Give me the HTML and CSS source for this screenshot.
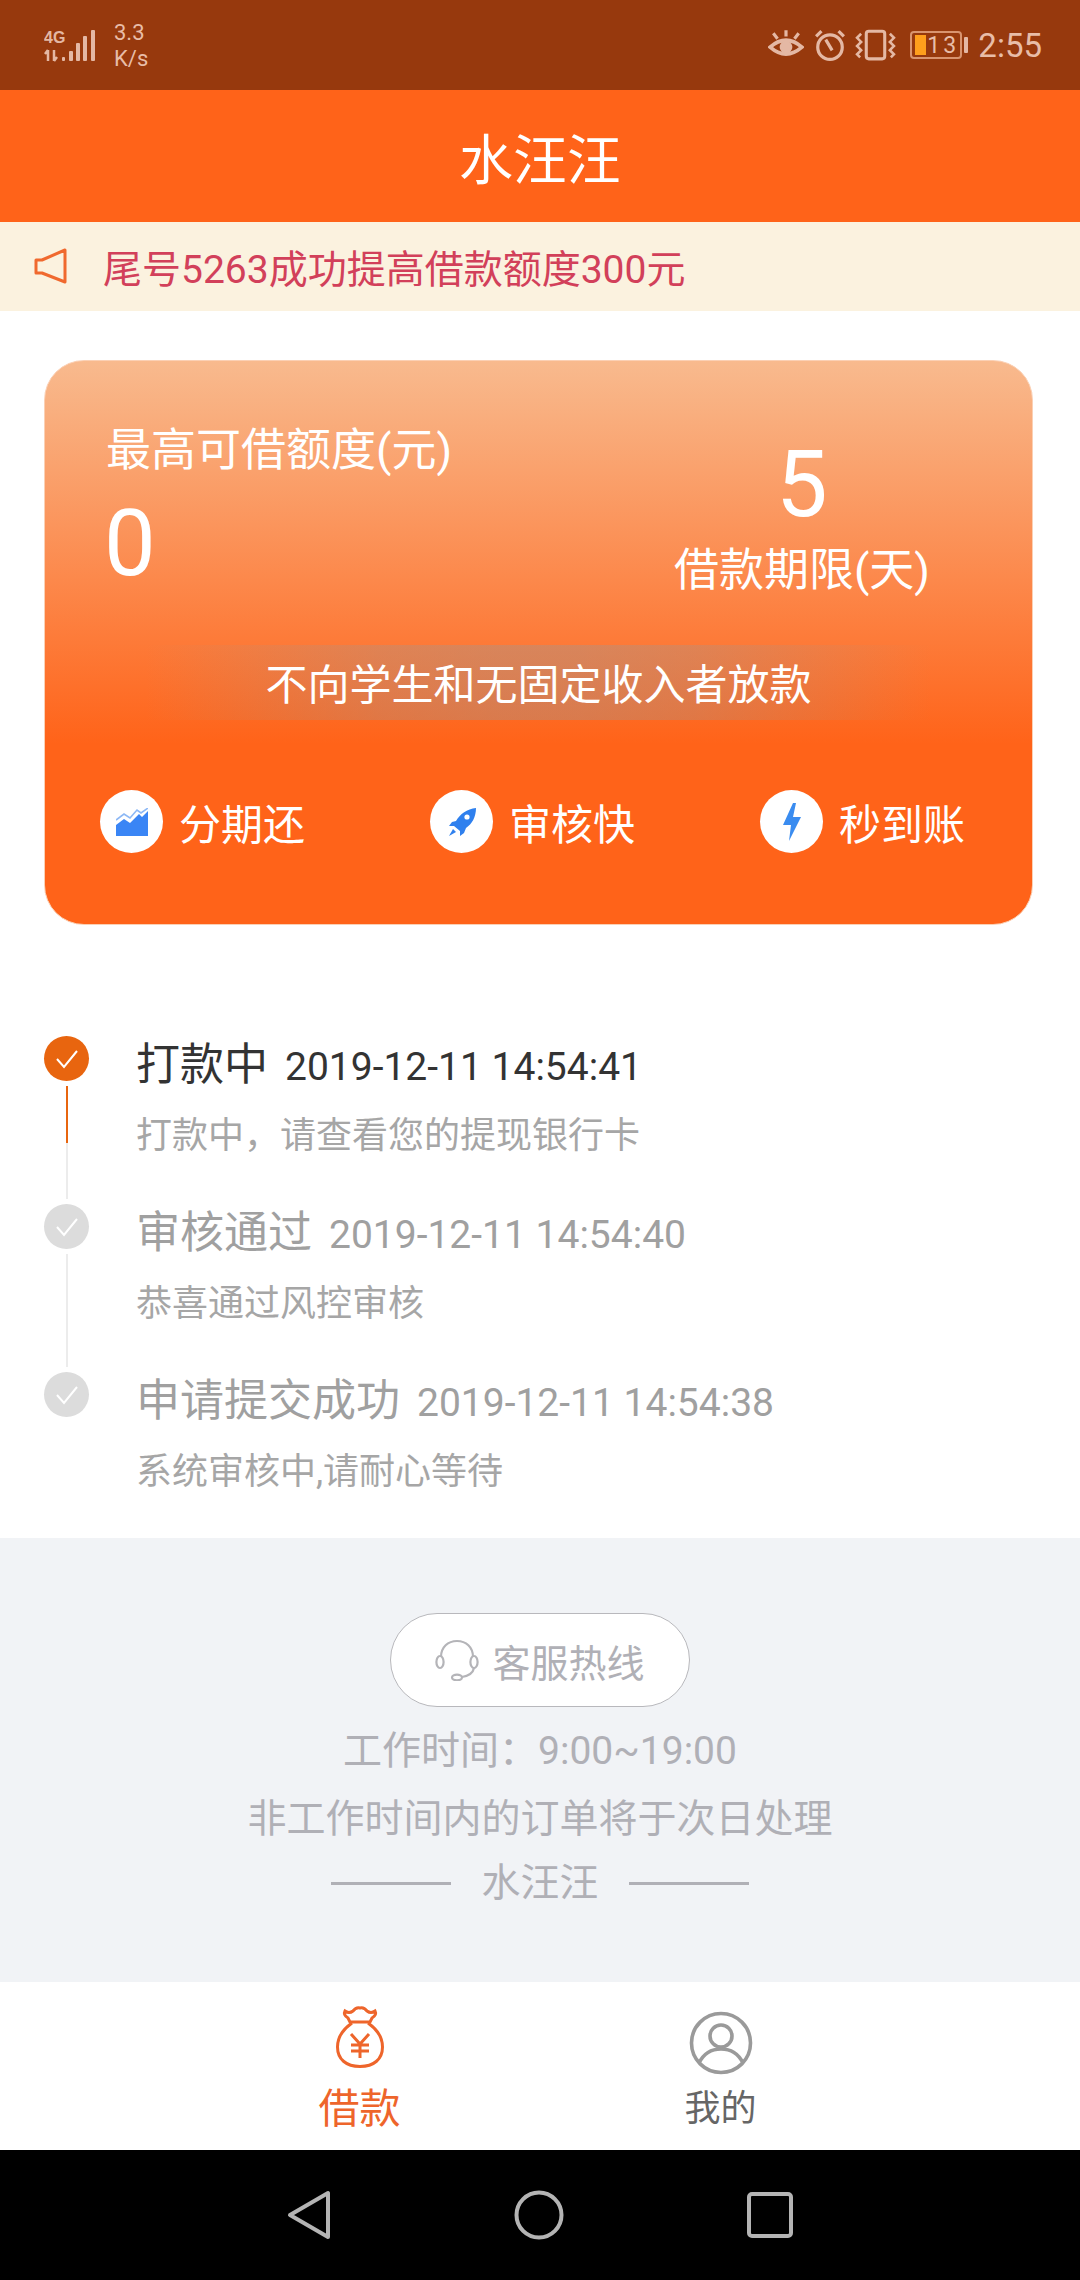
FILE: index.html
```html
<!DOCTYPE html>
<html lang="zh-CN">
<head>
  <meta charset="UTF-8">
  <title>水汪汪</title>
  <link rel="stylesheet" href="styles.css">
</head>
<body>

  <div class="statusbar">
    <div class="status-left">
      <svg class="signal" width="52" height="34" viewBox="0 0 52 34">
        <text x="0" y="14" class="net">4G</text>
        <path d="M4 32V21M4 21l-3 4M10 21v11M10 32l3-4" class="sig-arrow"/>
        <rect x="18" y="28" width="3" height="4" rx="1"/>
        <rect x="25" y="22" width="4" height="10" rx="1"/>
        <rect x="32" y="14" width="4" height="18" rx="1"/>
        <rect x="39" y="7" width="4" height="25" rx="1"/>
        <rect x="47" y="1" width="4" height="31" rx="1"/>
      </svg>
      <div class="speed">3.3<br>K/s</div>
    </div>
    <div class="status-right">
      <svg width="36" height="32" viewBox="0 0 34 30" class="st-icon">
        <path d="M2 17Q17 4 32 17Q17 30 2 17Z" fill="none" stroke-width="3.5"/>
        <circle cx="17" cy="17" r="6" fill="#e4b8a4" stroke="none"/>
        <path d="M17 1v6M5 4l4 5M29 4l-4 5" stroke-width="3"/>
      </svg>
      <svg width="32" height="32" viewBox="0 0 30 30" class="st-icon alarm">
        <circle cx="15" cy="17" r="11.5" fill="none" stroke-width="3"/>
        <path d="M11 10l6 10M2 7l5-5M28 7l-5-5" stroke-width="3"/>
      </svg>
      <svg width="41" height="32" viewBox="0 0 40 30" class="st-icon vibrate">
        <rect x="11" y="1.5" width="18" height="27" rx="2.5" fill="none" stroke-width="3"/>
        <path d="M6 4L2 8l4 4-4 4 4 4-4 4 3 3M34 4l4 4-4 4 4 4-4 4 4 4-3 3" fill="none" stroke-width="2.5"/>
      </svg>
      <div class="battery">
        <div class="battery-body"><span class="battery-fill"></span><span class="battery-num">13</span></div>
        <span class="battery-nub"></span>
      </div>
      <span class="clock">2:55</span>
    </div>
  </div>

  <div class="header">水汪汪</div>

  <div class="notice">
    <svg width="34" height="36" viewBox="0 0 34 36">
      <path d="M31 2L8 12H2V25H8L31 34Z" fill="none" stroke="#f0692e" stroke-width="3" stroke-linejoin="round"/>
    </svg>
    <span>尾号5263成功提高借款额度300元</span>
  </div>

  <div class="card">
    <div class="card-top">
      <div class="limit">
        <div class="card-label">最高可借额度(元)</div>
        <div class="card-num">0</div>
      </div>
      <div class="term">
        <div class="card-num">5</div>
        <div class="card-label">借款期限(天)</div>
      </div>
    </div>
    <div class="band">不向学生和无固定收入者放款</div>
    <div class="features">
      <div class="feature">
        <span class="feature-icon">
          <svg width="32" height="28" viewBox="0 0 32 28">
            <path d="M0 17L8 11L14 15L23 6L26 9L32 3V28H0Z" fill="#3a85f5"/>
            <path d="M0 12L8 6L14 10L21 2L25 5L32 0" fill="none" stroke="#8db8f5" stroke-width="1.6"/>
          </svg>
        </span>
        <span>分期还</span>
      </div>
      <div class="feature">
        <span class="feature-icon">
          <svg width="34" height="30" viewBox="0 0 34 30">
            <path d="M31 1C22 2 15 7 11 14L7 15L4 19L9 19L15 24L15 29L19 26L21 21C27 17 31 10 31 1Z" fill="#2f80ee"/>
            <circle cx="22" cy="10" r="2.6" fill="#fff"/>
            <path d="M8 22L4 29L11 25Z" fill="#2f80ee"/>
          </svg>
        </span>
        <span>审核快</span>
      </div>
      <div class="feature">
        <span class="feature-icon">
          <svg width="20" height="38" viewBox="0 0 20 38">
            <path d="M11 0L1 22H9L7 38L19 14H11L14 0Z" fill="#3a8cf0"/>
          </svg>
        </span>
        <span>秒到账</span>
      </div>
    </div>
  </div>

  <div class="timeline">
    <div class="step active">
      <div class="step-rail">
        <span class="dot"><svg width="26" height="22" viewBox="0 0 26 22"><path d="M3 11l7 8L23 3" fill="none" stroke="#fff" stroke-width="2"/></svg></span>
        <span class="rail-line"><i class="rail-on"></i></span>
      </div>
      <div class="step-body">
        <div class="step-title"><span class="step-name">打款中</span><span class="step-time">2019-12-11 14:54:41</span></div>
        <div class="step-desc">打款中，请查看您的提现银行卡</div>
      </div>
    </div>
    <div class="step">
      <div class="step-rail">
        <span class="dot"><svg width="26" height="22" viewBox="0 0 26 22"><path d="M3 11l7 8L23 3" fill="none" stroke="#fff" stroke-width="2"/></svg></span>
        <span class="rail-line"></span>
      </div>
      <div class="step-body">
        <div class="step-title"><span class="step-name">审核通过</span><span class="step-time">2019-12-11 14:54:40</span></div>
        <div class="step-desc">恭喜通过风控审核</div>
      </div>
    </div>
    <div class="step last">
      <div class="step-rail">
        <span class="dot"><svg width="26" height="22" viewBox="0 0 26 22"><path d="M3 11l7 8L23 3" fill="none" stroke="#fff" stroke-width="2"/></svg></span>
      </div>
      <div class="step-body">
        <div class="step-title"><span class="step-name">申请提交成功</span><span class="step-time">2019-12-11 14:54:38</span></div>
        <div class="step-desc">系统审核中,请耐心等待</div>
      </div>
    </div>
  </div>

  <div class="service">
    <div class="hotline">
      <svg width="44" height="42" viewBox="0 0 44 42" fill="none" stroke="#b4b4b8" stroke-width="2.2">
        <path d="M6 18C6 8 13 2 22 2C31 2 38 8 38 18"/>
        <ellipse cx="5" cy="23" rx="3.6" ry="6"/>
        <ellipse cx="39" cy="23" rx="3.6" ry="6"/>
        <path d="M39 29C38 34 33 37 27 38"/>
        <ellipse cx="22" cy="38.5" rx="5" ry="2.8"/>
      </svg>
      <span>客服热线</span>
    </div>
    <div class="service-line">工作时间：9:00~19:00</div>
    <div class="service-line">非工作时间内的订单将于次日处理</div>
    <div class="service-brand"><i></i><span>水汪汪</span><i></i></div>
  </div>

  <div class="tabbar">
    <div class="tab on">
      <svg width="48" height="62" viewBox="0 0 48 62" fill="none" stroke="#ee652b" stroke-width="3">
        <path d="M9 5Q13 8 17 5Q20 1 24 2Q28 1 31 5Q35 8 39 5Q41 9 36 12L34 16H14L12 12Q7 9 9 5Z"/>
        <path d="M16 17C6 24 1.5 32 1.5 41C1.5 53 10 60.5 24 60.5C38 60.5 46.5 53 46.5 41C46.5 32 42 24 32 17"/>
        <path d="M15 28L24 38L33 28M24 38V52M15 39H33M15 45H33"/>
      </svg>
      <span class="tab-label">借款</span>
    </div>
    <div class="tab me">
      <svg width="64" height="64" viewBox="0 0 64 64" fill="none" stroke="#9a9a9a" stroke-width="3.6">
        <circle cx="32" cy="32" r="29.5"/>
        <circle cx="32" cy="25" r="11"/>
        <path d="M10 52C15 42 22 38 32 38C42 38 49 42 54 52"/>
      </svg>
      <span class="tab-label">我的</span>
    </div>
  </div>

  <div class="navbar">
    <svg width="44" height="50" viewBox="0 0 44 50"><path d="M41 3V47L3 25Z" fill="none" stroke="#b4b4b4" stroke-width="4" stroke-linejoin="round"/></svg>
    <svg width="50" height="50" viewBox="0 0 50 50"><circle cx="25" cy="25" r="22.5" fill="none" stroke="#b4b4b4" stroke-width="4"/></svg>
    <svg width="46" height="46" viewBox="0 0 46 46"><rect x="2" y="2" width="42" height="42" rx="3" fill="none" stroke="#b4b4b4" stroke-width="4"/></svg>
  </div>

</body>
</html>
```

FILE: styles.css
```css
* {
  box-sizing: border-box;
}
body {
  margin: 0;
  width: 1080px;
  height: 2280px;
  overflow: hidden;
  background: #fff;
  font-family: Roboto, "Noto Sans CJK SC", sans-serif;
}

/* status bar */
.statusbar {
  height: 90px;
  background: #97390d;
  color: #e8bda8;
  display: flex;
  justify-content: space-between;
  align-items: center;
  padding: 0 38px 0 44px;
}
.status-left, .status-right {
  display: flex;
  align-items: center;
}
.signal {
  fill: #e4b8a4;
  margin-top: 2px;
}
.net {
  font-size: 16px;
  font-weight: 700;
  font-family: "Liberation Sans", sans-serif;
}
.sig-arrow {
  fill: none;
  stroke: #e4b8a4;
  stroke-width: 2.5;
}
.speed {
  margin: 2px 0 0 18px;
  font-size: 22px;
  line-height: 26px;
}
.st-icon {
  stroke: #e4b8a4;
  fill: none;
}
.alarm {
  margin-left: 10px;
}
.vibrate {
  margin-left: 9px;
}
.battery {
  display: flex;
  align-items: center;
  margin-left: 14px;
}
.battery-body {
  width: 52px;
  height: 28px;
  border: 2px solid #d9946f;
  border-radius: 4px;
  display: flex;
  align-items: center;
  padding-left: 3px;
  font-size: 23px;
}
.battery-fill {
  width: 11px;
  height: 20px;
  background: #ff9f1c;
}
.battery-num {
  margin-left: 1px;
  letter-spacing: 3px;
}
.battery-nub {
  width: 4px;
  height: 16px;
  margin-left: 2px;
  background: #e4b8a4;
  border-radius: 1px;
}
.clock {
  margin-left: 10px;
  font-size: 33px;
}

/* header + notice */
.header {
  height: 132px;
  background: #ff6319;
  color: #fff;
  font-size: 54px;
  display: flex;
  align-items: center;
  justify-content: center;
}
.notice {
  height: 89px;
  background: #fbf2df;
  color: #d2405a;
  font-size: 39px;
  display: flex;
  align-items: center;
  padding: 0 0 2px 34px;
}
.notice svg {
  margin-right: 35px;
}

/* card */
.card {
  margin: 49px 47px 0 44px;
  height: 565px;
  border: 1px solid #fbd0b4;
  border-radius: 40px;
  background: linear-gradient(#f8ba8e 0, #ff6319 68%);
  color: #fff;
}
.card-top {
  height: 284px;
  display: flex;
  justify-content: space-between;
}
.card-label {
  font-size: 45px;
  line-height: 60px;
}
.card-num {
  font-size: 92px;
  line-height: 100px;
}
.limit {
  padding: 60px 0 0 61px;
}
.limit .card-num {
  margin: 13px 0 0 -2px;
}
.term {
  padding: 74px 102px 0 0;
  text-align: center;
}
.term .card-label {
  margin-top: 6px;
}
.band {
  height: 75px;
  margin: 0 100px;
  padding-bottom: 2px;
  background: linear-gradient(90deg, rgba(153,153,153,0), rgba(153,153,153,.14) 14%, rgba(153,153,153,.3) 30%, rgba(153,153,153,.37) 45%, rgba(153,153,153,.37) 55%, rgba(153,153,153,.3) 70%, rgba(153,153,153,.14) 86%, rgba(153,153,153,0));
  display: flex;
  align-items: center;
  justify-content: center;
  font-size: 42px;
}
.features {
  margin-top: 70px;
  padding-left: 55px;
  display: flex;
  gap: 125px;
}
.feature {
  display: flex;
  align-items: center;
  font-size: 42px;
}
.feature-icon {
  width: 63px;
  height: 63px;
  border-radius: 50%;
  background: #fff;
  margin-right: 16px;
  display: flex;
  align-items: center;
  justify-content: center;
}

/* timeline */
.timeline {
  padding: 111px 0 0 44px;
}
.step {
  height: 168px;
  display: flex;
}
.step.last {
  height: 166px;
}
.step-rail {
  width: 45px;
  display: flex;
  flex-direction: column;
  align-items: center;
}
.dot {
  width: 45px;
  height: 45px;
  border-radius: 50%;
  background: #dcdcdc;
  flex: none;
  display: flex;
  align-items: center;
  justify-content: center;
}
.active .dot {
  background: #e8650f;
}
.rail-line {
  display: block;
  width: 2px;
  height: 113px;
  margin-top: 5px;
  background: #ececec;
}
.rail-on {
  display: block;
  height: 57px;
  background: #e8650f;
}
.step-body {
  margin-left: 47px;
  color: #a0a0a0;
}
.step-title {
  display: flex;
  align-items: baseline;
  line-height: 56px;
  margin-top: 1px;
}
.step-name {
  font-size: 44px;
}
.step-time {
  font-size: 39px;
  margin-left: 17px;
}
.active .step-title {
  color: #333;
}
.step-desc {
  margin-top: 19px;
  font-size: 36px;
  line-height: 44px;
  color: #a6a6a6;
}

/* service */
.service {
  height: 444px;
  background: #f1f3f6;
  color: #b0b0b6;
  padding-top: 75px;
  display: flex;
  flex-direction: column;
  align-items: center;
  font-size: 39px;
}
.hotline {
  width: 300px;
  height: 94px;
  border: 1px solid #b8b8bc;
  border-radius: 47px;
  background: #fff;
  display: flex;
  align-items: center;
  justify-content: center;
  gap: 13px;
  font-size: 38px;
}
.service-line {
  line-height: 68px;
}
.hotline + .service-line {
  margin-top: 10px;
}
.service-brand {
  display: flex;
  align-items: center;
  line-height: 60px;
  gap: 30px;
}
.service-brand i {
  width: 120px;
  height: 3px;
  background: #b0b0b6;
}

/* tabs */
.tabbar {
  height: 168px;
  background: #fff;
  display: flex;
  justify-content: center;
  gap: 245px;
  padding-top: 23px;
}
.tab {
  width: 116px;
  display: flex;
  flex-direction: column;
  align-items: center;
}
.tab svg {
  height: 64px;
}
.tab-label {
  margin-top: 16px;
  font-size: 36px;
  line-height: 48px;
  color: #666;
}
.on .tab-label {
  font-size: 41px;
  color: #ee652b;
}
.me svg {
  margin-top: 6px;
}
.me .tab-label {
  margin-top: 10px;
}

/* nav */
.navbar {
  height: 130px;
  background: #000;
  display: flex;
  justify-content: center;
  align-items: center;
  gap: 183px;
}
```
